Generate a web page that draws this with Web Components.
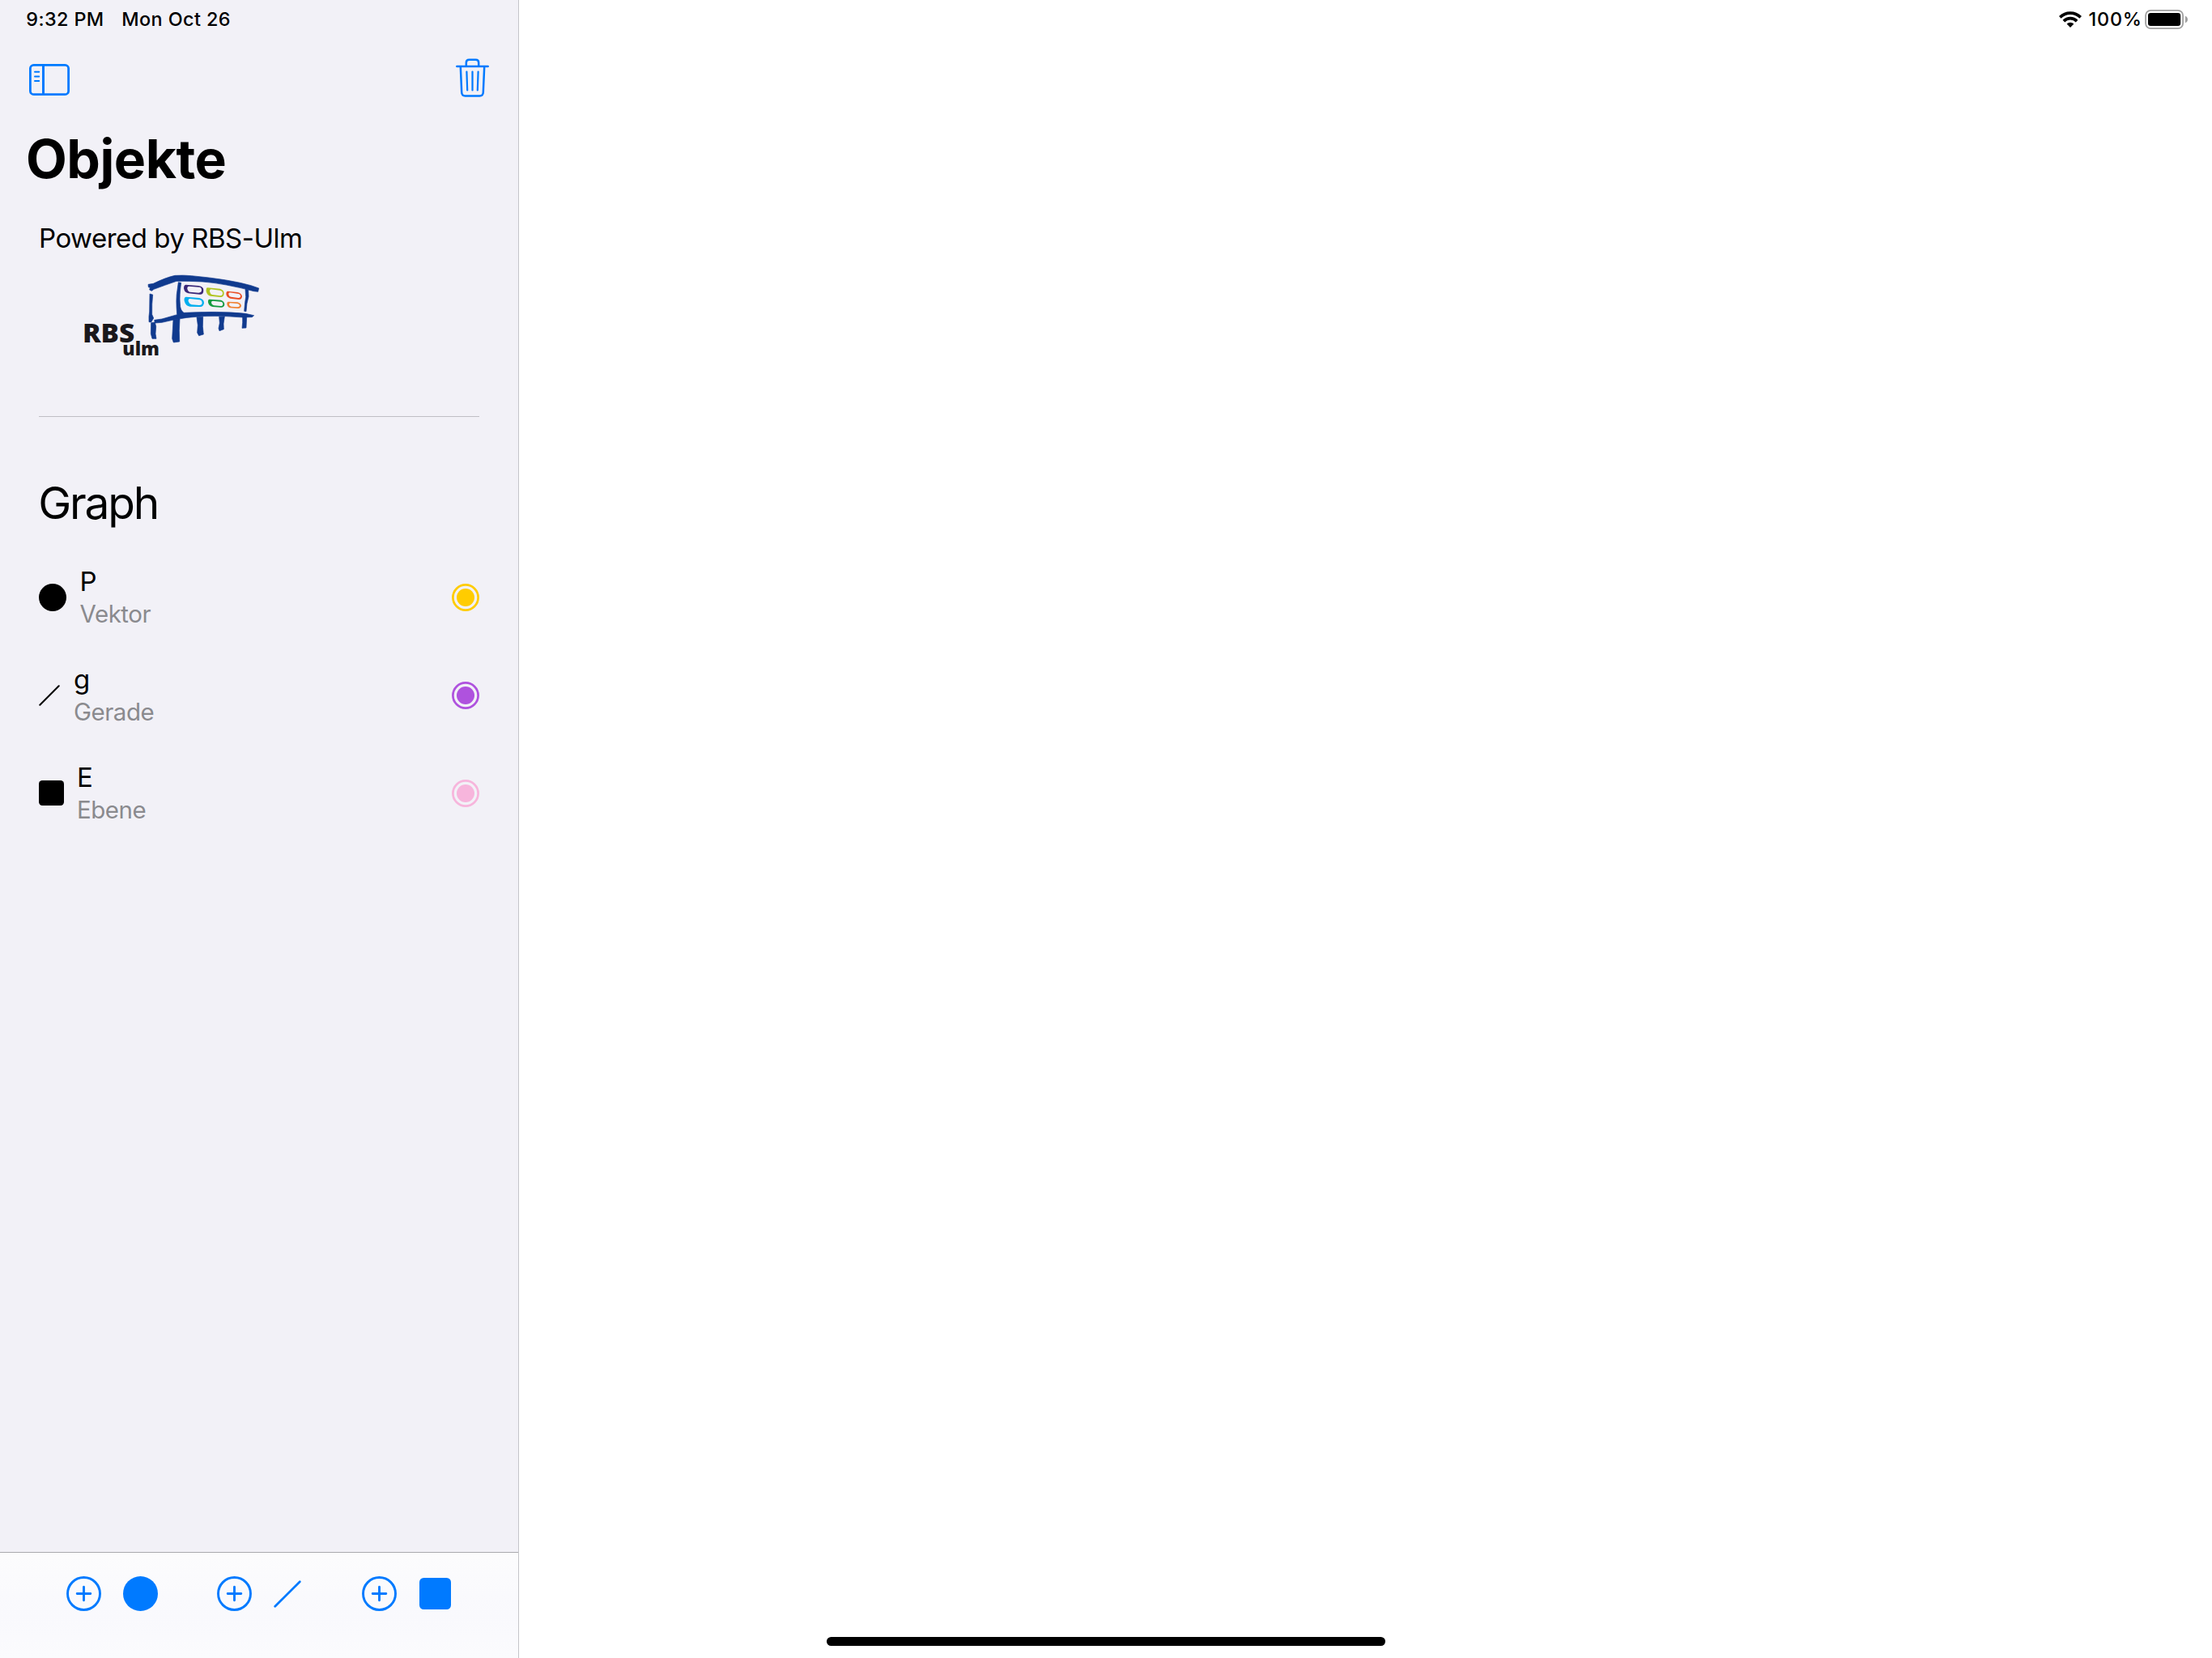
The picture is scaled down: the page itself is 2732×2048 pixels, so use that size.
<!DOCTYPE html>
<html lang="de">
<head>
<meta charset="utf-8">
<title>Objekte</title>
<style>
html,body{margin:0;height:100%;background:#fff}
body{font-family:Inter,"Liberation Sans",sans-serif;color:#000;overflow:hidden}
</style>
</head>
<body>
<app-shell>
  <side-bar slot="side">
    <object-row slot="row" shape="circle" name="P" kind="Vektor" color="#ffcc00"></object-row>
    <object-row slot="row" shape="line" name="g" kind="Gerade" color="#af52de"></object-row>
    <object-row slot="row" shape="square" name="E" kind="Ebene" color="#f7b5dc"></object-row>
  </side-bar>
  <detail-pane slot="main"></detail-pane>
</app-shell>
<script>
const define = (name, html) => customElements.define(name, class extends HTMLElement {
  connectedCallback() {
    if (this.shadowRoot) return;
    const root = this.attachShadow({mode: 'open'});
    root.innerHTML = typeof html === 'function' ? html(this) : html;
  }
});

const shapes = {
  circle: (s) => `<svg width="${s}" height="${s}" viewBox="0 0 34 34"><circle cx="17" cy="17" r="17"/></svg>`,
  line: (s) => `<svg width="${s}" height="${s}" viewBox="0 0 26 26"><path d="M1.3 24.7L24.7 1.3" fill="none" stroke="currentColor" stroke-width="2.1" stroke-linecap="round"/></svg>`,
  square: (s) => `<svg width="${s}" height="${s}" viewBox="0 0 31 31"><rect width="31" height="31" rx="4.2"/></svg>`
};

define('shape-icon', el => `
<style>:host{display:block}svg{display:block;fill:currentColor}</style>
${shapes[el.getAttribute('shape')](el.getAttribute('size'))}`);

define('app-shell', `
<style>
:host{display:flex;width:2732px;height:2048px;background:#fff}
::slotted([slot=main]){flex:1}
</style>
<slot name="side"></slot><slot name="main"></slot>`);

define('rbs-logo', `
<style>:host{display:block;width:240px;height:125px}svg{display:block}
text{font-family:"Open Sans","Noto Sans",sans-serif;font-weight:800;fill:#1a181c}</style>
<svg width="240" height="125" viewBox="0 0 720 375">
<g fill="#103a8e" stroke="#103a8e" stroke-width="2" stroke-linejoin="round">
<path d="M279 79L298 76Q345 53 378 46Q410 44 440 47Q580 60 660 83L689 93L686 106L670 104Q560 75 480 69Q430 66 384 67Q340 82 300 97L292 103L284 99L286 91L280 89Z"/>
<path d="M285 114L296 117Q292 150 293 190L299 204L290 219L282 218Q281 195 284 180Z"/>
<path d="M391 71L401 73Q394 120 397 150Q397 175 411 184Q540 177 640 187L671 194L664 200L630 201Q560 194 480 197Q420 200 370 211L330 220L304 222L302 211L330 207L386 191Q381 130 387 100Z"/>
<path d="M290 221L304 219L308 235L306 262L309 280L294 280L289 262Z"/>
<path d="M372 210L396 206L394 250L395 291L373 294L368 280L370 245Z"/>
<path d="M459 200L482 199L481 235L484 264L467 269L461 258L463 230Z"/>
<path d="M542 199L562 198L558 225L559 245L543 251L540 242L544 222Z"/>
<path d="M629 198L644 199L642 240L627 241L629 220Z"/>
<path d="M639 97L650 99L651 124Q643 150 642 179L635 178L638 145L641 125Z"/>
</g>
<g fill-rule="evenodd">
<path fill="#3a2878" d="M418 80L466 84Q485 87 484 101Q484 117 470 116L428 112Q414 110 411 94Q411 81 418 80ZM430 86Q423 87 424 95Q427 106 434 107L466 110Q477 110 477 100Q477 90 468 89Z"/>
<path fill="#afc41f" d="M499 91L545 95Q561 99 560 114Q558 127 546 126L510 122Q497 119 494 104Q493 91 499 91ZM512 97Q506 98 507 105Q509 115 516 117L546 121Q555 121 555 112Q555 103 545 101Z"/>
<path fill="#e94e24" d="M574 104L610 108Q626 112 627 124Q626 136 614 135L583 131Q570 128 568 115Q568 104 574 104ZM581 109Q576 110 577 116Q579 124 586 125L613 129Q622 129 621 121Q620 114 610 113Z"/>
<path fill="#00aeef" d="M419 125L468 129Q486 133 486 148Q484 163 470 162L434 161Q418 159 413 140Q411 126 419 125ZM434 132Q426 133 428 142Q431 152 440 154L468 156Q479 156 479 147Q478 137 468 136Z"/>
<path fill="#149a41" d="M506 134L549 137Q562 142 562 154Q560 165 548 164L518 162Q503 159 501 145Q500 135 506 134ZM518 140Q512 141 513 147Q515 156 522 157L547 159Q556 159 556 152Q556 144 548 143Z"/>
<path fill="#ef8130" d="M575 143L610 145Q623 148 624 159Q621 169 611 168L583 166Q573 163 571 152Q570 144 575 143ZM583 148Q578 149 579 154Q580 160 587 161L610 163Q618 163 618 157Q617 151 609 150Z"/>
</g>
<text x="36" y="293" font-size="96" textLength="193" lengthAdjust="spacingAndGlyphs">RBS</text>
<text x="184" y="343" font-size="66" textLength="137" lengthAdjust="spacingAndGlyphs">ulm</text>
</svg>`);

define('object-row', el => `
<style>
:host{display:flex;align-items:center;height:121px;width:544px}
.t{flex:1;margin-left:${{circle:16.6,line:17,square:16}[el.getAttribute('shape')]}px}
.n{font-size:33px;line-height:37px;height:40px}
.k{font-size:29.5px;line-height:36px;height:36px;color:#8a8a8e;letter-spacing:-.5px}
svg{display:block}
</style>
<shape-icon shape="${el.getAttribute('shape')}" size="${{circle:34,line:26,square:31}[el.getAttribute('shape')]}"></shape-icon>
<div class="t"><div class="n">${el.getAttribute('name')}</div><div class="k">${el.getAttribute('kind')}</div></div>
<svg width="34" height="34" viewBox="0 0 34 34" fill="${el.getAttribute('color')}"><circle cx="17" cy="17" r="11"/><circle cx="17" cy="17" r="15.6" fill="none" stroke="${el.getAttribute('color')}" stroke-width="2.7"/></svg>`);

define('add-button', el => `
<style>:host{display:flex;align-items:center;color:#007aff;height:43px}svg{display:block}
shape-icon{margin-left:${el.getAttribute('gap')}px}</style>
<svg width="43" height="43" viewBox="0 0 43 43" fill="none" stroke="currentColor" stroke-width="2.9" stroke-linecap="round"><circle cx="21.5" cy="21.5" r="20"/><path d="M21.5 13.2V29.8M13.2 21.5H29.8"/></svg>
<shape-icon shape="${el.getAttribute('shape')}" size="${el.getAttribute('size')}"></shape-icon>`);

define('side-bar', `
<style>
:host{display:flex;flex-direction:column;width:640px;border-right:1px solid #c5c5c9;background:#f2f1f7}
.status{height:48px;display:flex;font-size:23.4px;font-weight:500;line-height:47px;padding-left:32.3px;white-space:pre;letter-spacing:.4px}
.date{margin-left:21.7px}
.tools{height:96px;display:flex;justify-content:space-between;padding:24px 36px 0 36px;box-sizing:border-box;color:#007aff}
.tools svg{display:block}
h1{margin:0;height:102px;line-height:104px;font-size:66px;font-weight:700;padding-left:32px;letter-spacing:-.5px}
.list{padding-left:48px;flex:1}
.pow{font-size:33px;line-height:40px;margin-top:28px;height:51px;letter-spacing:-.5px}
rbs-logo{margin-left:42px}
.rule{height:1px;width:544px;background:#bfbec4;margin-top:64px}
h2{margin:66px 0 0 -.8px;font-weight:400;font-size:55px;line-height:80px;height:96px;letter-spacing:-2.2px}
.bar{height:101px;border-top:1px solid #a9a9ad;background:linear-gradient(#fcfcfd,#f9f9fd 60%,#fbfbfd);display:flex;padding:29px 0 0 82px}
</style>
<div class="status"><span class="time">9:32 PM</span><span class="date">Mon Oct 26</span></div>
<div class="tools">
<svg style="margin-top:7px" width="50" height="39" viewBox="0 0 50 39" fill="none" stroke="currentColor"><rect x="1.4" y="1.4" width="47.2" height="36.2" rx="4.2" stroke-width="2.8"/><path d="M17.5 1V38" stroke-width="3"/><path d="M7 9.8H12.2M7 15.4H12.2M7 21H12.2" stroke-width="2" stroke-linecap="round"/></svg>
<svg width="41" height="48" viewBox="0 0 41 48" fill="none" stroke="currentColor" stroke-linecap="round" stroke-width="2.5"><path d="M1.3 10H39.7"/><path d="M12.8 9.5V5.5Q12.8 1.8 16.5 1.8H24.5Q28.2 1.8 28.2 5.5V9.5M5.8 10.5L7.2 42Q7.4 46.4 11.5 46.4H29.5Q33.6 46.4 33.8 42L35.2 10.5"/><path d="M13.4 16.5L14.2 39.5M20.5 16.5V39.5M27.6 16.5L26.8 39.5" stroke-width="2.2"/></svg>
</div>
<h1>Objekte</h1>
<div class="list">
<div class="pow">Powered by RBS-Ulm</div>
<rbs-logo></rbs-logo>
<div class="rule"></div>
<h2>Graph</h2>
<slot name="row"></slot>
</div>
<div class="bar">
<add-button shape="circle" size="43" gap="27"></add-button>
<add-button shape="line" size="34" gap="27" style="margin-left:73px"></add-button>
<add-button shape="square" size="39" gap="28" style="margin-left:75px"></add-button>
</div>`);

define('detail-pane', `
<style>
:host{display:flex;flex-direction:column;justify-content:space-between;background:#fff}
.status{height:48px;display:flex;justify-content:flex-end;padding-right:30px;font-size:23.4px;font-weight:500;line-height:47px}
.status span{letter-spacing:.8px}
svg{display:block}
.home{width:690px;height:11px;border-radius:5.5px;background:#000;margin:0 0 15px 380px}
</style>
<div class="status"><svg style="margin:14px 8.5px 0 0" width="28" height="20" viewBox="0 0 28 20"><g fill="none" stroke="#000" stroke-width="3.7"><path d="M1.3 7.4A18 18 0 0 1 26.7 7.4"/><path d="M5.9 12.1A11.4 11.4 0 0 1 22.1 12.1"/></g><path d="M9.6 15.6A6.2 6.2 0 0 1 18.4 15.6L14 20Z"/></svg><span>100%</span>
<svg style="margin:12px 0 0 3.2px" width="53" height="24" viewBox="0 0 53 24"><rect x="1.1" y=".9" width="46" height="22.2" rx="6.2" fill="none" stroke="#a0a0a0" stroke-width="1.8"/><rect x="4" y="4" width="40.2" height="16" rx="3.2"/><path d="M50 7.7Q53 9 53 12T50 16.3Z" fill="#a0a0a0"/></svg></div>
<div class="home"></div>`);
</script>
</body>
</html>
